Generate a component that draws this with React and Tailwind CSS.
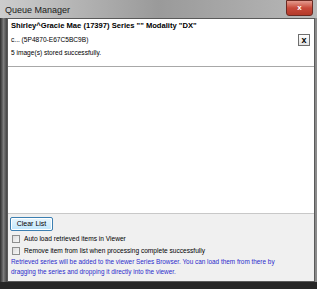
import React from 'react';

const font = { fontFamily: '"Liberation Sans", Arial, sans-serif' };

const Check = ({ label }) => (
  <div className="flex items-center gap-[4px] h-[12px]">
    <span className="w-[8px] h-[8px] border border-[#8e8f8f] bg-gradient-to-br from-[#dcdcdc] to-[#f8f8f8]" />
    <span>{label}</span>
  </div>
);

const App = () => {
  return (
    <div
      className="w-[317px] h-[289px] bg-[#1e1e1e] flex flex-col overflow-hidden text-[6.6px] text-black"
      style={font}
    >
      {/* title bar */}
      <div className="h-[18px] flex items-stretch bg-gradient-to-r from-[#cdcdcd] via-[#9a9a9a] to-[#b8b8b8]">
        <div className="flex-1 pl-[5px] pt-[4px] text-[9px] text-[#1a1a1a]">Queue Manager</div>
        <div className="w-[27px] mr-[4px] h-[16px] rounded-b-[3px] border border-[#6b2a22] bg-gradient-to-b from-[#e39a8e] via-[#c8493a] to-[#b33a2a] flex items-center justify-center text-white font-bold text-[8px]">
          x
        </div>
      </div>

      <div className="flex flex-1">
        {/* left frame */}
        <div className="w-[7px] bg-gradient-to-r from-[#2e2e2e] via-[#7c7c7c] to-[#444]" />

        <div className="flex-1 flex flex-col border border-[#5a5a5a]">
          {/* list */}
          <div className="h-[195px] bg-white border-b border-[#c8c8c8]">
            <div className="h-[48px] border-b border-[#a8a8a8] px-[3px] pt-[1px] flex flex-col">
              <div className="font-bold text-[7.6px] h-[12px] flex items-center">
                Shirley^Gracie Mae (17397) Series "" Modality "DX"
              </div>
              <div className="flex items-center justify-between h-[14px] mt-[1px]">
                <span>c... (5P4870-E67C5BC9B)</span>
                <span className="w-[12px] h-[12px] mr-[1px] border border-[#6e6e6e] bg-gradient-to-b from-white to-[#e2e2e2] flex items-center justify-center font-bold text-[9px] leading-none">
                  x
                </span>
              </div>
              <div className="h-[12px] flex items-center">5 image(s) stored successfully.</div>
            </div>
          </div>

          {/* bottom panel */}
          <div className="flex-1 bg-[#f0f0f0] px-[2px] pt-[3px] flex flex-col">
            <div className="w-[43px] h-[14px] rounded-[2px] border border-[#3c7fb1] bg-gradient-to-b from-[#eaf6fd] to-[#bee6fd] flex items-center justify-center text-[7px] shadow-[inset_0_0_0_1px_#fff]">
              Clear List
            </div>
            <div className="pl-[2px] pt-[2px] flex flex-col">
              <Check label="Auto load retrieved items in Viewer" />
              <Check label="Remove item from list when processing complete successfully" />
            </div>
            <div className="text-[#2b2bcc] text-[6.4px] leading-[10px] pl-[1px] whitespace-nowrap">
              Retrieved series will be added to the viewer Series Browser. You can load them from there by
              <br />
              dragging the series and dropping it directly into the viewer.
            </div>
          </div>
        </div>

        {/* right frame */}
        <div className="w-[2px] bg-[#8a8a8a]" />
      </div>

      <div className="h-[7px] bg-[#262626]" />
    </div>
  );
};

export default App;
